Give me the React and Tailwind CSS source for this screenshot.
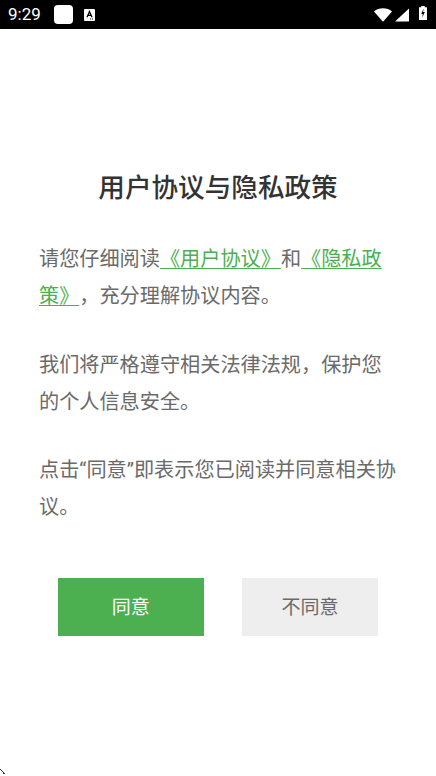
export default function App() {
  return (
    <div className="relative flex h-[776px] w-[436px] flex-col overflow-hidden bg-white font-['Roboto','Noto_Sans_CJK_SC',sans-serif] [text-spacing-trim:space-all]">
      <div className="flex h-[29px] items-center bg-black pl-[8px] pr-[9px] text-white">
        <span className="w-[33px] text-[17px] leading-[29px]">9:29</span>
        <div className="ml-[13px] h-[19px] w-[19px] rounded-[4px] bg-white" />
        <svg className="ml-[11px]" width="11" height="12" viewBox="0 0 11 12">
          <rect x="0" y="0" width="11" height="12" rx="1" fill="#fff" />
          <path d="M3 8.200 5.500 2.500 8 8.200M3.900 6.400H7.100" stroke="#000" strokeWidth="1.300" fill="none" />
          <path d="M6 10h1M8 10h1" stroke="#000" strokeWidth="1" />
        </svg>
        <svg className="ml-auto" width="18" height="14" viewBox="0 0 19 14">
          <path d="M0 3.200C2.600 1.200 5.800 0 9.500 0s6.900 1.200 9.500 3.200L9.500 14Z" fill="#fff" />
        </svg>
        <svg className="ml-[3px]" width="14" height="14" viewBox="0 0 15 14">
          <path d="M15 0V14H0Z" fill="#fff" />
        </svg>
        <svg className="mb-[3px] ml-[10px]" width="8" height="16" viewBox="0 0 9 16">
          <path d="M2.500 0h4v1.500H9V16H0V1.500h2.500Z" fill="#fff" />
          <path d="M5.200 3 2.500 9h1.800l-.6 4.200L6.500 7H4.600Z" fill="#000" />
        </svg>
      </div>

      <div className="flex flex-col px-[39px] pt-[139px]">
        <h1 className="text-center text-[26.600px] font-medium leading-[40px] text-[#333]">用户协议与隐私政策</h1>
        <div className="mt-[33px] flex flex-col gap-[31px] text-[20.170px] leading-[37.300px] text-[#6a6a6a]">
          <p>
            请您仔细阅读
            <a className="text-[#4CAF50] underline decoration-1 underline-offset-[2px]">《用户协议》</a>
            和
            <a className="text-[#4CAF50] underline decoration-1 underline-offset-[2px]">《隐私政策》</a>
            ，充分理解协议内容。
          </p>
          <p>我们将严格遵守相关法律法规，保护您的个人信息安全。</p>
          <p>点击“同意”即表示您已阅读并同意相关协议。</p>
        </div>
        <div className="mt-[51.400px] flex text-[19px]">
          <button className="ml-[19px] h-[58px] w-[145.700px] bg-[#4CAF50] pt-[3px] text-white">同意</button>
          <button className="ml-[38.300px] h-[58px] w-[136px] bg-[#EEEEEE] pt-[3px] text-[#6a6a6a]">不同意</button>
        </div>
      </div>

      <svg className="absolute bottom-0 left-0" width="6" height="7" viewBox="0 0 6 7">
        <path d="M0 0h1v1h1v1H1V1H0ZM2 2h1v1h1v1h1v1H3V3H2Z" fill="#333" />
      </svg>
    </div>
  );
}
